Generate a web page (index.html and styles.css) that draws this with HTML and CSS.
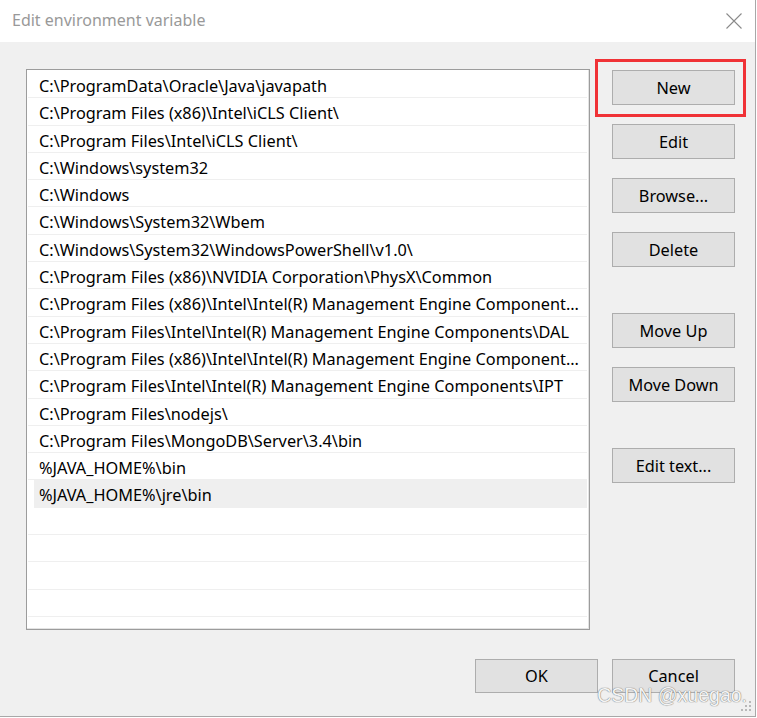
FILE: index.html
```html
<!DOCTYPE html>
<html lang="en">
<head>
<meta charset="utf-8">
<title>Edit environment variable</title>
<link rel="stylesheet" href="styles.css">
</head>
<body>
<div class="dialog">
  <div class="titlebar">
    <span class="title">Edit environment variable</span>
    <svg class="close" width="16" height="16" viewBox="0 0 16 16" aria-hidden="true"><path d="M0.5 0.5 L15.5 15.5 M15.5 0.5 L0.5 15.5" stroke="#8a8a8a" stroke-width="1.1" fill="none"/></svg>
  </div>
  <div class="content">
    <div class="main">
      <div class="list">
        <div class="row">C:\ProgramData\Oracle\Java\javapath</div>
        <div class="row">C:\Program Files (x86)\Intel\iCLS Client\</div>
        <div class="row">C:\Program Files\Intel\iCLS Client\</div>
        <div class="row">C:\Windows\system32</div>
        <div class="row">C:\Windows</div>
        <div class="row">C:\Windows\System32\Wbem</div>
        <div class="row">C:\Windows\System32\WindowsPowerShell\v1.0\</div>
        <div class="row">C:\Program Files (x86)\NVIDIA Corporation\PhysX\Common</div>
        <div class="row">C:\Program Files (x86)\Intel\Intel(R) Management Engine Component...</div>
        <div class="row">C:\Program Files\Intel\Intel(R) Management Engine Components\DAL</div>
        <div class="row">C:\Program Files (x86)\Intel\Intel(R) Management Engine Component...</div>
        <div class="row">C:\Program Files\Intel\Intel(R) Management Engine Components\IPT</div>
        <div class="row">C:\Program Files\nodejs\</div>
        <div class="row">C:\Program Files\MongoDB\Server\3.4\bin</div>
        <div class="row">%JAVA_HOME%\bin</div>
        <div class="row selected">%JAVA_HOME%\jre\bin</div>
        <div class="row"></div>
        <div class="row"></div>
        <div class="row"></div>
        <div class="row"></div>
        <div class="row"></div>
      </div>
      <div class="side">
        <div class="group">
          <div class="highlight"><button class="btn">New</button></div>
          <button class="btn">Edit</button>
          <button class="btn">Browse...</button>
          <button class="btn">Delete</button>
        </div>
        <div class="group">
          <button class="btn">Move Up</button>
          <button class="btn">Move Down</button>
        </div>
        <div class="group">
          <button class="btn">Edit text...</button>
        </div>
      </div>
    </div>
    <div class="footer">
      <button class="btn">OK</button>
      <button class="btn">Cancel</button>
    </div>
  </div>
  <div class="watermark">CSDN @xuegao.</div>
  <svg class="grip" width="11" height="11" viewBox="0 0 11 11" aria-hidden="true">
    <g fill="#b8b8b8">
      <rect x="8" y="0" width="2" height="2"/>
      <rect x="4" y="4" width="2" height="2"/><rect x="8" y="4" width="2" height="2"/>
      <rect x="0" y="8" width="2" height="2"/><rect x="4" y="8" width="2" height="2"/><rect x="8" y="8" width="2" height="2"/>
    </g>
  </svg>
</div>
</body>
</html>
```

FILE: styles.css
```css
* { box-sizing: border-box; }
html, body { margin: 0; padding: 0; background: #ffffff; }
body {
  font-family: "Noto Sans", "Open Sans", sans-serif;
  font-size: 16.3px;
  color: #000;
}
.dialog {
  position: relative;
  width: 756px;
  height: 717px;
  background: #f0f0f0;
  border-right: 1px solid #a8a8a8;
  border-bottom: 1px solid #a8a8a8;
  display: flex;
  flex-direction: column;
}
.titlebar {
  height: 42px;
  background: #ffffff;
  display: flex;
  align-items: center;
  justify-content: space-between;
  padding: 0 13px 3px 12px;
}
.title {
  color: #999999;
  font-size: 16px;
}
.close { display: block; margin-top: 2px; }
.content {
  flex: 1;
  display: flex;
  flex-direction: column;
  padding: 27px 20px 0 26px;
}
.main {
  display: flex;
  gap: 22px;
}
.list {
  width: 564px;
  height: 561px;
  background: #ffffff;
  border: 1px solid #9c9c9c;
  box-shadow: inset -1px -1px 0 #e3e3e3;
  padding: 1px 2px 0 1px;
  overflow: hidden;
}
.row {
  height: 27.3px;
  line-height: 26px;
  padding-top: 2px;
  padding-left: 11px;
  white-space: nowrap;
  overflow: hidden;
  border-bottom: 1px solid #efefef;
}
.row.selected {
  background: #efefef;
  margin-left: 6px;
  padding-left: 5px;
}
.side {
  width: 123px;
  padding-top: 1px;
  display: flex;
  flex-direction: column;
  gap: 46px;
}
.group {
  display: flex;
  flex-direction: column;
  gap: 19px;
}
.btn {
  display: block;
  width: 123px;
  height: 35px;
  padding: 0;
  background: #e1e1e1;
  border: 1px solid #adadad;
  font-family: inherit;
  font-size: 16.3px;
  color: #000;
}
.highlight {
  position: relative;
}
.highlight::after {
  content: "";
  position: absolute;
  left: -17px;
  right: -11px;
  top: -11px;
  bottom: -12px;
  border: 3px solid #f03236;
  pointer-events: none;
}
.footer {
  display: flex;
  justify-content: flex-end;
  gap: 14px;
  margin-top: 29px;
}
.footer .btn { height: 34px; }
.watermark {
  position: absolute;
  right: 8px;
  bottom: 12px;
  line-height: 18px;
  font-family: "Liberation Sans", Arial, sans-serif;
  font-size: 19.5px;
  color: #f4f4f4;
  text-shadow: 0 0 1px #777, 0 0 1px #777;
}
.grip {
  position: absolute;
  right: 3px;
  bottom: 4px;
}
```
